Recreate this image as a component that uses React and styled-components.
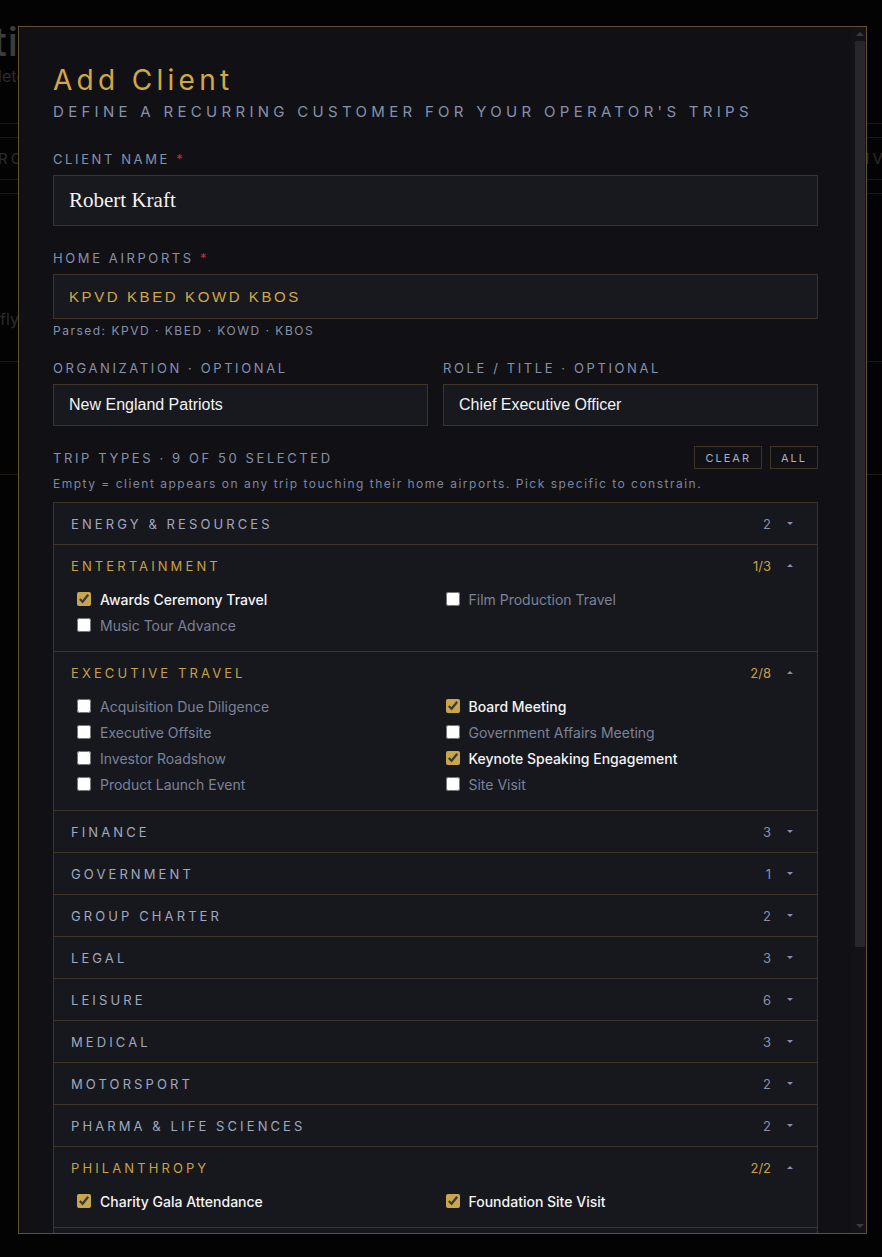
import React, { useState } from "react";
import styled, { createGlobalStyle } from "styled-components";

const GlobalStyle = createGlobalStyle`
  html, body {
    margin: 0;
    padding: 0;
    background: #0c0c0e;
  }
  body {
    font-family: Inter, "Noto Sans", sans-serif;
    overflow: hidden;
  }
  * {
    box-sizing: border-box;
  }
`;

const GOLD = "#d3a843";
const MUTED = "#8790ab";

const initialCategories = [
  { name: "Energy & Resources", count: 2 },
  {
    name: "Entertainment",
    open: true,
    items: [
      ["Awards Ceremony Travel", true],
      ["Film Production Travel", false],
      ["Music Tour Advance", false],
    ],
  },
  {
    name: "Executive Travel",
    open: true,
    items: [
      ["Acquisition Due Diligence", false],
      ["Board Meeting", true],
      ["Executive Offsite", false],
      ["Government Affairs Meeting", false],
      ["Investor Roadshow", false],
      ["Keynote Speaking Engagement", true],
      ["Product Launch Event", false],
      ["Site Visit", false],
    ],
  },
  { name: "Finance", count: 3 },
  { name: "Government", count: 1 },
  { name: "Group Charter", count: 2 },
  { name: "Legal", count: 3 },
  { name: "Leisure", count: 6 },
  { name: "Medical", count: 3 },
  { name: "Motorsport", count: 2 },
  { name: "Pharma & Life Sciences", count: 2 },
  {
    name: "Philanthropy",
    open: true,
    items: [
      ["Charity Gala Attendance", true],
      ["Foundation Site Visit", true],
    ],
  },
  { name: "Real Estate", count: 2 },
  { name: "Sports", count: 5 },
  { name: "Technology", count: 3 },
  { name: "VIP Services", count: 3 },
];

const App = () => {
  const [name, setName] = useState("Robert Kraft");
  const [airports, setAirports] = useState("KPVD KBED KOWD KBOS");
  const [org, setOrg] = useState("New England Patriots");
  const [role, setRole] = useState("Chief Executive Officer");
  const [categories, setCategories] = useState(initialCategories);

  const parsed = airports.trim().split(/\s+/).filter(Boolean).join(" · ");

  const toggleOpen = (i) => {
    setCategories(
      categories.map((c, j) => (j === i && c.items ? { ...c, open: !c.open } : c))
    );
  };

  const toggleItem = (i, k) => {
    setCategories(
      categories.map((c, j) =>
        j === i
          ? { ...c, items: c.items.map((it, m) => (m === k ? [it[0], !it[1]] : it)) }
          : c
      )
    );
  };

  return (
    <>
      <GlobalStyle />
      <Page>
        <PageTitle>Active Clients</PageTitle>
        <PageSub>Complete roster of recurring customers</PageSub>
        <BgTable>
          <BgStrip />
          <BgHead>
            <span>Roster</span>
            <span>Archive</span>
          </BgHead>
          <BgStrip />
          <BgRow>
            <span>flying out of the home airports, repeat trips also show up in the calendar so no</span>
          </BgRow>
          <BgRow $short />
        </BgTable>
      </Page>

      <Overlay>
        <Modal>
          <Body>
            <Title>Add Client</Title>
            <Subtitle>Define a recurring customer for your operator's trips</Subtitle>

            <Field $gap={30}>
              <Label>
                Client Name <Req>*</Req>
              </Label>
              <NameInput value={name} onChange={(e) => setName(e.target.value)} />
            </Field>

            <Field $gap={24}>
              <Label>
                Home Airports <Req>*</Req>
              </Label>
              <AirportInput value={airports} onChange={(e) => setAirports(e.target.value)} />
              <Hint>Parsed: {parsed}</Hint>
            </Field>

            <TwoCol>
              <Field>
                <Label>Organization · Optional</Label>
                <TextInput value={org} onChange={(e) => setOrg(e.target.value)} />
              </Field>
              <Field>
                <Label>Role / Title · Optional</Label>
                <TextInput value={role} onChange={(e) => setRole(e.target.value)} />
              </Field>
            </TwoCol>

            <TripHeader>
              <TripLabel>Trip Types · 9 of 50 selected</TripLabel>
              <SmallButton>Clear</SmallButton>
              <SmallButton>All</SmallButton>
            </TripHeader>
            <Help>
              Empty = client appears on any trip touching their home airports. Pick specific to
              constrain.
            </Help>

            <Accordion>
              {categories.map((c, i) => {
                const total = c.items ? c.items.length : c.count;
                const selected = c.items ? c.items.filter((it) => it[1]).length : 0;
                return (
                  <Section key={c.name}>
                    <SectionHeader onClick={() => toggleOpen(i)}>
                      <SectionName $open={c.open}>{c.name}</SectionName>
                      <Count $open={c.open}>{c.open ? `${selected}/${total}` : total}</Count>
                      <Chevron $open={c.open} />
                    </SectionHeader>
                    {c.open && (
                      <Items>
                        {c.items.map((it, k) => (
                          <Item key={it[0]} $checked={it[1]}>
                            <Box
                              type="checkbox"
                              checked={it[1]}
                              onChange={() => toggleItem(i, k)}
                            />
                            {it[0]}
                          </Item>
                        ))}
                      </Items>
                    )}
                  </Section>
                );
              })}
            </Accordion>

            <Field $gap={32}>
              <Label>Notes · Optional</Label>
              <Notes placeholder="Preferences, catering, handling notes…" />
            </Field>

            <Footer>
              <GhostButton>Cancel</GhostButton>
              <PrimaryButton>Add Client</PrimaryButton>
            </Footer>
          </Body>

          <ScrollTrack>
            <ScrollArrow>
              <ArrowGlyph $up />
            </ScrollArrow>
            <Thumb />
            <ScrollArrow>
              <ArrowGlyph />
            </ScrollArrow>
          </ScrollTrack>
        </Modal>
      </Overlay>
    </>
  );
};

export default App;

const Page = styled.div`
  height: 1257px;
  padding-top: 18px;
  color: #d8d8dc;
`;

const PageTitle = styled.h1`
  margin: 0 0 0 -60px;
  font-size: 40px;
  line-height: 48px;
  font-weight: 500;
  letter-spacing: 1px;
`;

const PageSub = styled.div`
  margin: 0 0 0 -47px;
  font-size: 16px;
  white-space: nowrap;
  color: #9a9aa0;
`;

const BgTable = styled.div`
  margin-top: 37px;
  border-top: 1px solid #6b5c3a;
`;

const BgStrip = styled.div`
  height: 14px;
  border-bottom: 1px solid #6b5c3a;
`;

const BgHead = styled.div`
  height: 42px;
  display: flex;
  justify-content: space-between;
  align-items: center;
  margin-left: -2px;
  margin-right: -16px;
  font-size: 15px;
  letter-spacing: 3px;
  text-transform: uppercase;
  color: #9a9aa0;
  border-bottom: 1px solid #6b5c3a;
`;

const BgRow = styled.div`
  height: ${(p) => (p.$short ? "113px" : "168px")};
  display: flex;
  align-items: flex-end;
  padding-bottom: 32px;
  white-space: nowrap;
  overflow: hidden;
  font-size: 16px;
  color: #9a9aa0;
  border-bottom: 1px solid #6b5c3a;
`;

const Overlay = styled.div`
  position: fixed;
  inset: 0;
  background: rgba(0, 0, 0, 0.72);
  display: flex;
  align-items: flex-start;
  justify-content: flex-start;
  padding: 26px 0 0 18px;
`;

const Modal = styled.div`
  width: 849px;
  height: 1208px;
  display: flex;
  background: #111115;
  border: 1px solid #5f5131;
  overflow: hidden;
`;

const Body = styled.div`
  flex: 1;
  min-width: 0;
  overflow-y: auto;
  scrollbar-width: none;
  padding: 36px 33px 28px 34px;
`;

const ScrollTrack = styled.div`
  flex: none;
  width: 15px;
  display: flex;
  flex-direction: column;
  background: #131317;
`;

const ScrollArrow = styled.div`
  height: 14px;
  display: flex;
  align-items: center;
  justify-content: center;
  padding-left: 2px;
  &:last-child {
    margin-top: auto;
  }
`;

const ArrowGlyph = styled.span`
  width: 0;
  height: 0;
  border-left: 4px solid transparent;
  border-right: 4px solid transparent;
  ${(p) => (p.$up ? "border-bottom: 4px solid #3a3a40;" : "border-top: 4px solid #3a3a40;")}
`;

const Thumb = styled.div`
  height: 906px;
  margin: 0 1px 0 4px;
  background: #27272c;
`;

const Title = styled.h2`
  margin: 0;
  font-size: 28px;
  line-height: 34px;
  font-weight: 400;
  letter-spacing: 4.3px;
  color: ${GOLD};
`;

const Subtitle = styled.div`
  margin-top: 6px;
  font-size: 15px;
  line-height: 18px;
  letter-spacing: 4.3px;
  white-space: nowrap;
  text-transform: uppercase;
  color: ${MUTED};
`;

const Field = styled.div`
  display: flex;
  flex-direction: column;
  margin-top: ${(p) => (p.$gap ? `${p.$gap}px` : "0")};
`;

const Label = styled.label`
  font-size: 13px;
  line-height: 16px;
  letter-spacing: 2.6px;
  text-transform: uppercase;
  color: ${MUTED};
  margin-bottom: 8px;
`;

const Req = styled.span`
  color: #c0323a;
`;

const InputBase = styled.input`
  width: 100%;
  background: #18191f;
  border: 1px solid #3d3526;
  outline: none;
  padding: 0 15px;
  color: #f3f3f3;
`;

const NameInput = styled(InputBase)`
  height: 51px;
  font-family: "Liberation Serif", "DejaVu Serif", serif;
  font-size: 21px;
`;

const AirportInput = styled(InputBase)`
  height: 45px;
  font-size: 15px;
  font-weight: 500;
  letter-spacing: 2.6px;
  color: ${GOLD};
`;

const TextInput = styled(InputBase)`
  height: 42px;
  font-size: 16px;
  font-weight: 500;
`;

const Hint = styled.div`
  margin-top: 5px;
  font-size: 12px;
  line-height: 14px;
  letter-spacing: 1.5px;
  color: ${MUTED};
`;

const TwoCol = styled.div`
  display: grid;
  grid-template-columns: 1fr 1fr;
  gap: 15px;
  margin-top: 22px;
`;

const TripHeader = styled.div`
  display: flex;
  align-items: center;
  gap: 8px;
  margin-top: 20px;
`;

const TripLabel = styled.div`
  flex: 1;
  font-size: 13px;
  line-height: 16px;
  letter-spacing: 2.6px;
  text-transform: uppercase;
  color: ${MUTED};
`;

const SmallButton = styled.button`
  height: 23px;
  padding: 0 10px;
  background: transparent;
  border: 1px solid #3d3526;
  font-family: Inter, sans-serif;
  font-size: 11px;
  letter-spacing: 2px;
  text-transform: uppercase;
  color: #a9b0c6;
  cursor: pointer;
`;

const Help = styled.div`
  margin-top: 8px;
  font-size: 12px;
  line-height: 14px;
  letter-spacing: 1.5px;
  white-space: nowrap;
  color: #7d86a1;
`;

const Accordion = styled.div`
  margin-top: 11px;
  border: 1px solid #3d3526;
  border-bottom: none;
  background: #17181e;
`;

const Section = styled.div`
  border-bottom: 1px solid #3d3526;
`;

const SectionHeader = styled.div`
  height: 41px;
  display: flex;
  align-items: center;
  padding: 0 24px 0 17px;
  cursor: pointer;
`;

const SectionName = styled.div`
  flex: 1;
  font-size: 13px;
  letter-spacing: 3.1px;
  text-transform: uppercase;
  color: ${(p) => (p.$open ? "#c9a141" : "#a0a8bf")};
`;

const Count = styled.span`
  font-size: 13px;
  color: ${(p) => (p.$open ? "#c9a141" : MUTED)};
  margin-right: 16px;
`;

const Chevron = styled.span`
  width: 0;
  height: 0;
  border-left: 3px solid transparent;
  border-right: 3px solid transparent;
  ${(p) => (p.$open ? `border-bottom: 3px solid ${MUTED};` : `border-top: 3px solid ${MUTED};`)}
`;

const Items = styled.div`
  display: grid;
  grid-template-columns: 1fr 1fr;
  column-gap: 10px;
  grid-auto-rows: 26px;
  padding: 0 17px 13px 19px;
`;

const Item = styled.label`
  display: flex;
  align-items: center;
  gap: 9px;
  font-size: 14px;
  font-weight: ${(p) => (p.$checked ? 500 : 400)};
  color: ${(p) => (p.$checked ? "#f3f3f5" : "#7b8298")};
  cursor: pointer;
`;

const Box = styled.input`
  width: 14px;
  height: 14px;
  margin: 0 0 0 4px;
  accent-color: #c9a54b;
  color-scheme: light;
`;

const Notes = styled.textarea`
  height: 64px;
  background: #18191f;
  border: 1px solid #3d3526;
  resize: none;
  padding: 12px 15px;
  font-family: Inter, sans-serif;
  font-size: 14px;
  color: #f3f3f3;
  outline: none;
`;

const Footer = styled.div`
  display: flex;
  justify-content: flex-end;
  gap: 12px;
  margin-top: 24px;
`;

const GhostButton = styled.button`
  height: 42px;
  padding: 0 22px;
  background: transparent;
  border: 1px solid #3d3526;
  font-family: Inter, sans-serif;
  font-size: 12px;
  letter-spacing: 2.5px;
  text-transform: uppercase;
  color: #a9b0c6;
`;

const PrimaryButton = styled(GhostButton)`
  background: #c9a54b;
  border-color: #c9a54b;
  color: #111115;
  font-weight: 600;
`;
